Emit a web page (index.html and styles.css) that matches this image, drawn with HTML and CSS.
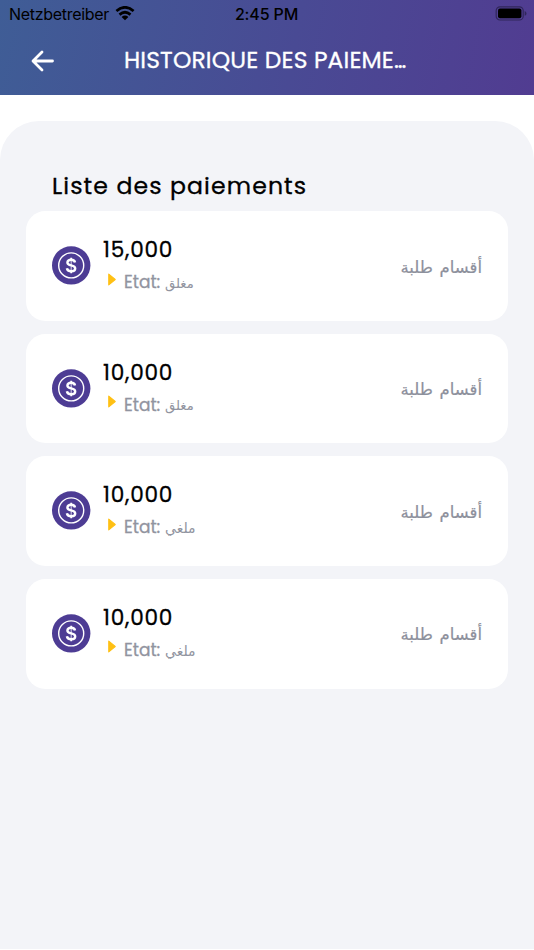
FILE: index.html
```html
<!DOCTYPE html>
<html lang="fr">
<head>
<meta charset="utf-8">
<title>Historique des paiements</title>
<link rel="stylesheet" href="styles.css">
</head>
<body>
<svg class="defs" width="0" height="0" aria-hidden="true">
  <symbol id="coin" viewBox="0 0 39 39">
    <circle cx="19.2" cy="19.4" r="19.2" fill="#4d3c94"/>
    <circle cx="19.2" cy="19.4" r="12.5" fill="none" stroke="#fff" stroke-width="1.4"/>
    <path d="M23 16.5C22.7 14.6 21.2 13.8 19.1 13.8C16.9 13.8 15.4 14.8 15.4 16.5C15.4 18.3 17 19 19.2 19.4C21.6 19.9 23.2 20.6 23.2 22.5C23.2 24.4 21.5 25.2 19.3 25.2C16.8 25.2 15.2 24.2 14.9 22.2" fill="none" stroke="#fff" stroke-width="2.4"/>
    <path d="M19.2 11.7V14.4M19.2 24.8V27.3" stroke="#fff" stroke-width="1.8"/>
    <path d="M19.2 14V25" stroke="#fff" stroke-width=".8"/>
  </symbol>
</svg>
<header class="header">
  <div class="status">
    <div class="carrier"><span class="carrier-name">Netzbetreiber</span>
      <svg class="wifi" width="20" height="15" viewBox="0 0 20 15" fill="none" stroke="#000" stroke-width="2.7"><path d="M1.4 5.1Q10 -2.5 18.6 5.1M4.5 8.6Q10 3.9 15.5 8.6"/><path d="M6.6 10.9Q10 8 13.4 10.9L10 14.3Z" fill="#000" stroke="none"/></svg>
    </div>
    <div class="clock">2:45 PM</div>
    <svg class="battery" width="32" height="16" viewBox="0 0 32 16"><rect x="1.2" y=".8" width="27" height="13.2" rx="3.8" fill="none" stroke="#30275b" stroke-width="1.2"/><rect x="3" y="2.6" width="23.4" height="9.6" rx="2" fill="#000"/><path d="M29.7 5Q31.5 5.7 31.5 7.4T29.7 9.8Z" fill="#30275b"/></svg>
  </div>
  <div class="navbar">
    <svg class="back" width="24" height="22" viewBox="0 0 24 22" fill="none" stroke="#fff" stroke-width="2.8" stroke-linecap="round" stroke-linejoin="round"><path d="M11 2L2 11L11 20M2.4 11H21.5"/></svg>
    <h1 class="title">HISTORIQUE DES PAIEME<span class="dots">...</span></h1>
  </div>
</header>
<main class="panel">
  <h2 class="heading">Liste des paiements</h2>
  <div class="list">
    <article class="card"><svg class="coin"><use href="#coin"/></svg><div class="info"><div class="amount">15,000</div><div class="state"><svg class="arrow" viewBox="0 0 8 12"><path d="M1 1L7 6L1 11Z"/></svg><span class="label">Etat:</span><span class="value closed" dir="rtl" lang="ar">مغلق</span></div></div><div class="kind" dir="rtl" lang="ar">أقسام طلبة</div></article>
    <article class="card"><svg class="coin"><use href="#coin"/></svg><div class="info"><div class="amount">10,000</div><div class="state"><svg class="arrow" viewBox="0 0 8 12"><path d="M1 1L7 6L1 11Z"/></svg><span class="label">Etat:</span><span class="value closed" dir="rtl" lang="ar">مغلق</span></div></div><div class="kind" dir="rtl" lang="ar">أقسام طلبة</div></article>
    <article class="card"><svg class="coin"><use href="#coin"/></svg><div class="info"><div class="amount">10,000</div><div class="state"><svg class="arrow" viewBox="0 0 8 12"><path d="M1 1L7 6L1 11Z"/></svg><span class="label">Etat:</span><span class="value" dir="rtl" lang="ar">ملغي</span></div></div><div class="kind" dir="rtl" lang="ar">أقسام طلبة</div></article>
    <article class="card"><svg class="coin"><use href="#coin"/></svg><div class="info"><div class="amount">10,000</div><div class="state"><svg class="arrow" viewBox="0 0 8 12"><path d="M1 1L7 6L1 11Z"/></svg><span class="label">Etat:</span><span class="value" dir="rtl" lang="ar">ملغي</span></div></div><div class="kind" dir="rtl" lang="ar">أقسام طلبة</div></article>
  </div>
</main>
</body>
</html>
```
FILE: styles.css
```css
* { box-sizing: border-box; }
body {
  margin: 0;
  height: 949px;
  display: flex;
  flex-direction: column;
  overflow: hidden;
  background: #fff;
  color: #000;
  font-family: Poppins, Inter, "DejaVu Sans", sans-serif;
}
.defs { position: absolute; }
.header {
  height: 95.3px;
  flex: none;
  background: linear-gradient(100deg, #3f5d96, #494a94 55%, #513c91);
}
.status {
  height: 27px;
  padding: 0 7px 0 9px;
  display: grid;
  grid-template-columns: 1fr auto 1fr;
  align-items: center;
  font: 16px/27px Inter, sans-serif;
}
.carrier { display: flex; align-items: center; gap: 6px; }
.carrier-name { padding-top: 1px; letter-spacing: -.3px; white-space: nowrap; }
.wifi { margin-top: -1px; }
.clock { margin: 0 1px 0 -1px; padding: 1px 1px 0 0; font-weight: 500; letter-spacing: -.15px; }
.battery { justify-self: end; }
.navbar { height: 68px; padding-left: 31px; display: flex; align-items: center; }
.back { flex: none; }
.title {
  margin: -2px 0 0 69px;
  font-size: 23.4px;
  line-height: 34px;
  font-weight: 400;
  letter-spacing: .15px;
  color: #fff;
  -webkit-text-stroke: .3px #fff;
  white-space: nowrap;
}
.dots { letter-spacing: -1.2px; }
.panel {
  flex: 1;
  margin-top: 26px;
  padding: 47px 26px 0;
  border-radius: 39px 39px 0 0;
  background: #f3f4f8;
}
.heading {
  margin: 0 0 8px 26px;
  font-size: 23.6px;
  line-height: 35px;
  font-weight: 400;
  letter-spacing: 1.1px;
  -webkit-text-stroke: .3px #000;
  white-space: nowrap;
}
.list { display: flex; flex-direction: column; gap: 13px; }
.card {
  height: 109.6px;
  padding: 0 26px;
  display: flex;
  align-items: center;
  border-radius: 19.5px;
  background: #fff;
}
.coin { width: 39px; height: 39px; margin-top: -1px; flex: none; }
.info { margin-left: 12px; flex: 1; }
.amount { height: 34px; font-size: 21.6px; line-height: 34px; letter-spacing: .8px; -webkit-text-stroke: .3px #000; }
.state { height: 32px; display: flex; align-items: center; color: #9194a0; }
.arrow { width: 10px; height: 13px; margin: -8px 7px 0 4px; fill: #ffc014; stroke: #ffc014; stroke-width: 1; stroke-linejoin: round; }
.label { width: 41px; margin-top: -2px; font-size: 17px; letter-spacing: 0; -webkit-text-stroke: .3px #9194a0; }
.value { font-family: "DejaVu Sans", sans-serif; font-size: 14px; white-space: nowrap; }
.closed { font-size: 13.2px; }
.kind { margin-top: 3px; color: #8d909c; font: 16.5px/30px "DejaVu Sans", sans-serif; word-spacing: 1.5px; -webkit-text-stroke: .2px #8d909c; white-space: nowrap; }
```
